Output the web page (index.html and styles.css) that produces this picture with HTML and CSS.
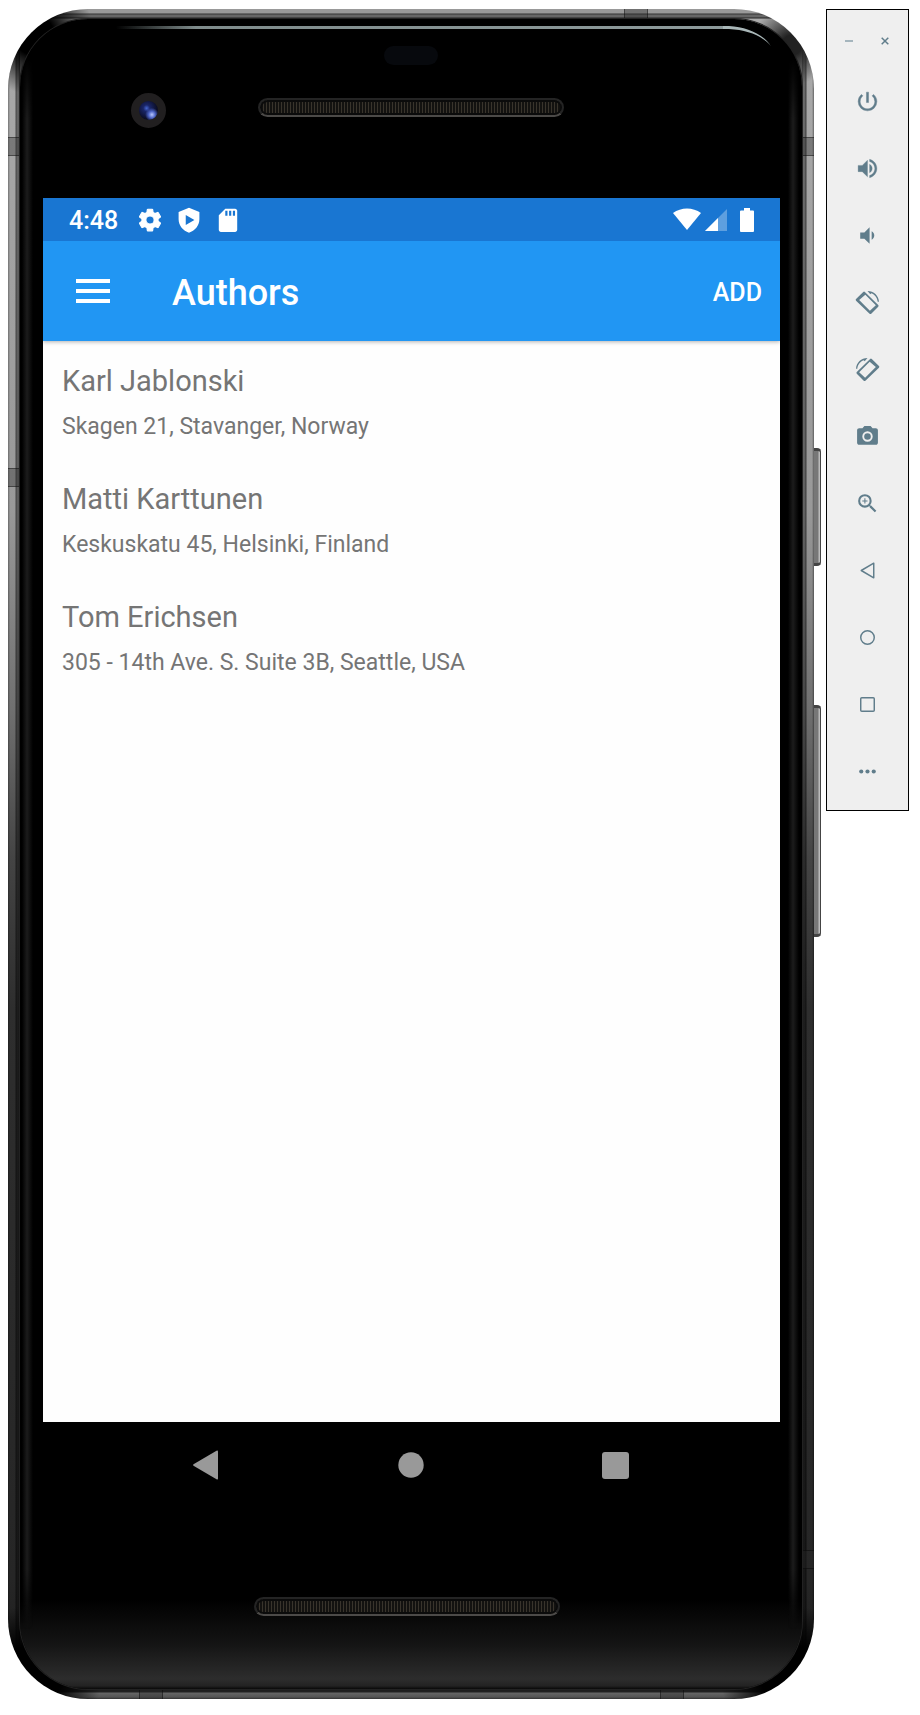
FILE: index.html
```html
<!DOCTYPE html>
<html lang="en">
<head>
<meta charset="utf-8">
<title>Authors</title>
<link rel="stylesheet" href="styles.css">
</head>
<body>
<main class="phone">
  <span class="side-key side-key-power"></span>
  <span class="side-key side-key-volume"></span>
  <div class="rim">
    <span class="seam seam-top"></span>
    <span class="seam seam-left-high"></span>
    <span class="seam seam-left-mid"></span>
    <span class="seam seam-right-high"></span>
    <span class="seam seam-right-low"></span>
    <span class="seam seam-bottom-left"></span>
    <span class="seam seam-bottom-right"></span>
    <div class="face">
      <div class="bezel-top">
        <div class="glint">
          <span class="glint-line"></span>
          <svg width="48" height="20" viewBox="0 0 48 20"><path d="M0 0H6C24 1 40 8 48 20C38 9 24 4 6 3H0Z" fill="#a9b7b8"/></svg>
        </div>
        <span class="sensor"></span>
        <div class="bezel-row">
          <span class="camera"></span>
          <span class="speaker"></span>
        </div>
      </div>
      <section class="screen">
        <div class="status-bar">
          <span class="clock">4:48</span>
          <svg width="26" height="26" viewBox="0 0 24 24"><path d="M19.43 12.98c.04-.32.07-.64.07-.98s-.03-.66-.07-.98l2.11-1.65c.19-.15.24-.42.12-.64l-2-3.46c-.12-.22-.39-.3-.61-.22l-2.49 1c-.52-.4-1.08-.73-1.69-.98l-.38-2.65C14.46 2.18 14.25 2 14 2h-4c-.25 0-.46.18-.49.42l-.38 2.65c-.61.25-1.17.59-1.69.98l-2.49-1c-.23-.09-.49 0-.61.22l-2 3.46c-.13.22-.07.49.12.64l2.11 1.65c-.04.32-.07.65-.07.98s.03.66.07.98l-2.11 1.65c-.19.15-.24.42-.12.64l2 3.46c.12.22.39.3.61.22l2.49-1c.52.4 1.08.73 1.69.98l.38 2.65c.03.24.24.42.49.42h4c.25 0 .46-.18.49-.42l.38-2.65c.61-.25 1.17-.59 1.69-.98l2.49 1c.23.09.49 0 .61-.22l2-3.46c.12-.22.07-.49-.12-.64l-2.11-1.65zM12 15.8a3.8 3.8 0 1 1 0-7.6 3.8 3.8 0 0 1 0 7.6z" stroke="#fff" stroke-width="1"/></svg>
          <svg width="26" height="26" viewBox="0 0 24 24"><path fill-rule="evenodd" d="M12 .8 2.400 4.600v6.800c0 6 4.200 10.600 9.600 12.400 5.400-1.800 9.600-6.400 9.600-12.400V4.600zM9 7.300v9.200l8-4.600z"/></svg>
          <svg width="26" height="26" viewBox="0 0 24 24"><path fill-rule="evenodd" d="M18.500 1.500H9.500L3.500 7.500v13.500c0 1.100.9 2 2 2h13c1.100 0 2-.9 2-2v-17.500c0-1.100-.9-2-2-2zM9.500 3.500h2v4.500h-2zM13 3.500h2v4.500h-2zM16.500 3.500h2v4.500h-2z"/></svg>
          <span class="status-gap"></span>
          <svg class="wifi" width="28" height="24" viewBox="0 0 28 24"><path d="M0 5C8-1 20-1 28 5L14 22Z"/></svg>
          <svg class="signal" width="22" height="24" viewBox="0 0 22 24"><path d="M22 1V23H0Z" opacity=".3"/><path d="M13 10V23H0Z"/></svg>
          <svg width="14" height="24" viewBox="0 0 14 24"><path d="M4 0h6v2.500h3q1 0 1 1V23q0 1-1 1H1q-1 0-1-1V3.500q0-1 1-1h3z"/></svg>
        </div>
        <header class="app-bar">
          <button class="menu" aria-label="Open navigation"><svg width="34" height="24" viewBox="0 0 34 24"><path d="M0 0h34v4H0zM0 10h34v4H0zM0 20h34v4H0z"/></svg></button>
          <h1 class="title">Authors</h1>
          <button class="add">ADD</button>
        </header>
        <ul class="authors">
          <li class="author"><h2 class="name">Karl Jablonski</h2><p class="address">Skagen 21, Stavanger, Norway</p></li>
          <li class="author"><h2 class="name">Matti Karttunen</h2><p class="address">Keskuskatu 45, Helsinki, Finland</p></li>
          <li class="author"><h2 class="name">Tom Erichsen</h2><p class="address">305 - 14th Ave. S. Suite 3B, Seattle, USA</p></li>
        </ul>
      </section>
      <nav class="nav-bar">
        <button aria-label="Back"><svg width="28" height="32" viewBox="0 0 28 32"><path d="M26 2.500V29.500Q26 31 24.500 30.200L1.500 16.800Q.5 16 1.500 15.200L24.500 1.800Q26 1 26 2.500Z"/></svg></button>
        <button aria-label="Home"><svg width="26" height="26" viewBox="0 0 26 26"><circle cx="13" cy="13" r="12.700"/></svg></button>
        <button aria-label="Recents"><svg width="27" height="27" viewBox="0 0 27 27"><rect width="27" height="27" rx="3"/></svg></button>
      </nav>
      <div class="bezel-bottom"><span class="speaker"></span></div>
    </div>
  </div>
</main>
<aside class="toolbar">
  <div class="window-keys">
    <button aria-label="Minimize"><svg width="8" height="8" viewBox="0 0 8 8"><path d="M0 4H8" stroke="#a5b5bd" stroke-width="2"/></svg></button>
    <button aria-label="Close"><svg width="8" height="8" viewBox="0 0 8 8"><path d="M.7.7 7.300 7.300M7.300.7.7 7.300" stroke="#607d8b" stroke-width="1.500"/></svg></button>
  </div>
  <button class="tool" aria-label="Power"><svg viewBox="0 0 24 24"><path d="M13 3h-2v10h2V3zm4.830 2.170-1.420 1.420A6.920 6.920 0 0 1 19 12c0 3.870-3.130 7-7 7s-7-3.130-7-7c0-2.190 1.010-4.140 2.580-5.420L6.170 5.170A8.932 8.932 0 0 0 3 12a9 9 0 0 0 18 0c0-2.740-1.230-5.180-3.170-6.830z" stroke="#607d8b" stroke-width=".4"/></svg></button>
  <button class="tool" aria-label="Volume up"><svg viewBox="0 0 24 24"><path d="M3 9v6h4l5 5V4L7 9H3zm13.500 3c0-1.770-1.020-3.290-2.500-4.030v8.050c1.480-.73 2.500-2.250 2.500-4.020zM14 3.230v2.060c2.890.86 5 3.540 5 6.710s-2.110 5.850-5 6.710v2.060c4.010-.91 7-4.490 7-8.770s-2.990-7.860-7-8.770z" stroke="#607d8b" stroke-width=".3"/></svg></button>
  <button class="tool" aria-label="Volume down"><svg viewBox="0 0 24 24"><path d="M18.500 12c0-1.770-1.020-3.290-2.500-4.030v8.050c1.480-.73 2.500-2.250 2.500-4.020zM5 9v6h4l5 5V4L9 9H5z"/></svg></button>
  <button class="tool" aria-label="Rotate left"><svg viewBox="0 0 24 24"><path fill-rule="evenodd" d="M9.500 1.800Q8.700 1 7.900 1.800L1 8.700Q.2 9.500 1 10.300L14 22.700Q14.800 23.500 15.600 22.700L22.300 16Q23 15.200 22.300 14.400ZM9.900 4.500 20 14.700 14.300 19.800 4 9.500Z"/><path d="M12 1C18 1 22.800 5.500 23 11.300H21.800C21.500 7.500 19 4.300 15.600 3L14.700 4Z"/></svg></button>
  <button class="tool" aria-label="Rotate right"><svg viewBox="0 0 24 24"><g transform="matrix(-1 0 0 1 24 0)"><path fill-rule="evenodd" d="M9.500 1.800Q8.700 1 7.900 1.800L1 8.700Q.2 9.500 1 10.300L14 22.700Q14.800 23.500 15.600 22.700L22.300 16Q23 15.200 22.300 14.400ZM9.900 4.500 20 14.700 14.300 19.800 4 9.500Z"/><path d="M12 1C18 1 22.800 5.500 23 11.300H21.800C21.500 7.500 19 4.300 15.600 3L14.700 4Z"/></g></svg></button>
  <button class="tool" aria-label="Take screenshot"><svg viewBox="0 0 24 24"><path fill-rule="evenodd" d="M9 2 7.170 4H4c-1.100 0-2 .9-2 2v12c0 1.100.9 2 2 2h16c1.100 0 2-.9 2-2V6c0-1.100-.9-2-2-2h-3.170L15 2H9zm3 15a5 5 0 1 1 0-10 5 5 0 0 1 0 10zm0-1.800a3.200 3.200 0 1 0 0-6.400 3.200 3.200 0 0 0 0 6.400z"/></svg></button>
  <button class="tool" aria-label="Zoom"><svg viewBox="0 0 24 24"><path d="M15.500 14h-.79l-.28-.27A6.471 6.471 0 0 0 16 9.500 6.500 6.500 0 1 0 9.500 16c1.610 0 3.090-.59 4.230-1.570l.27.28v.79l5 4.990L20.490 19l-4.990-5zm-6 0a4.500 4.500 0 1 1 0-9 4.500 4.500 0 0 1 0 9zM12 10h-2v2H9v-2H7V9h2V7h1v2h2v1z"/></svg></button>
  <button class="tool" aria-label="Back"><svg viewBox="0 0 24 24"><path d="M18 5V19L6 12Z" fill="none" stroke="#607d8b" stroke-width="1.400" stroke-linejoin="round"/></svg></button>
  <button class="tool" aria-label="Home"><svg viewBox="0 0 24 24"><circle cx="12" cy="12" r="6.500" fill="none" stroke="#607d8b" stroke-width="1.400"/></svg></button>
  <button class="tool" aria-label="Overview"><svg viewBox="0 0 24 24"><rect x="5.500" y="5.500" width="13" height="13" rx="1" fill="none" stroke="#607d8b" stroke-width="1.400"/></svg></button>
  <button class="tool" aria-label="More"><svg viewBox="0 0 24 24"><circle cx="6" cy="12" r="2"/><circle cx="12" cy="12" r="2"/><circle cx="18" cy="12" r="2"/></svg></button>
</aside>
</body>
</html>
```
FILE: styles.css
```css
* {
  box-sizing: border-box;
}

body {
  margin: 0;
  min-height: 100vh;
  padding: 9px 11px 16px 8px;
  display: flex;
  gap: 12px;
  background: #fff;
  font-family: Roboto, "Noto Sans", sans-serif;
}

button {
  margin: 0;
  padding: 0;
  border: 0;
  background: none;
  font: inherit;
  color: inherit;
}

svg {
  display: block;
  flex: none;
}

h1, h2, p, ul {
  margin: 0;
  padding: 0;
  font-weight: 400;
}

/* Device body */
.phone {
  position: relative;
  flex: 1;
  min-width: 0;
  display: flex;
}

.rim {
  position: relative;
  flex: 1;
  min-width: 0;
  display: flex;
  padding: 10px 12px;
  border-radius: 80px;
  overflow: hidden;
  background:
    radial-gradient(circle at 26px 26px, #000 20px, transparent 60px),
    radial-gradient(circle at calc(100% - 22px) 36px, #222 10px, transparent 40px),
    radial-gradient(circle at 24px calc(100% - 24px), #000 30px, transparent 70px),
    radial-gradient(circle at calc(100% - 24px) calc(100% - 24px), #000 30px, transparent 70px),
    linear-gradient(90deg, rgba(0, 0, 0, .3), transparent 2px 7px, rgba(0, 0, 0, .55) 8px, rgba(0, 0, 0, .35) 10px, rgba(0, 0, 0, .7) 12px, transparent 12px calc(100% - 12px), rgba(0, 0, 0, .55) calc(100% - 12px), rgba(0, 0, 0, .3) calc(100% - 10px), rgba(0, 0, 0, .6) calc(100% - 8px), transparent calc(100% - 7px) calc(100% - 2px), rgba(0, 0, 0, .4) 100%),
    linear-gradient(#999 0 4px, #333 5px, #666 6px 8px, #222 9px, #aaa 10px, #999 500px, #707070 700px, #444 850px, #2e2e2e 1000px, #262626 calc(100% - 120px), #1c1c1c calc(100% - 10px), #222 calc(100% - 7px), #666 calc(100% - 6px), #555 calc(100% - 2px), #333 100%);
}

.face {
  position: relative;
  flex: 1;
  min-width: 0;
  display: flex;
  flex-direction: column;
  border-radius: 68px;
  box-shadow: 0 0 0 1px #222;
  background: linear-gradient(#000 calc(100% - 90px), #141414 calc(100% - 45px), #2d2d2d calc(100% - 10px), #222 calc(100% - 3px), #080808 100%);
}

/* Soft reflection down both sides of the glass */
.face::before {
  content: "";
  position: absolute;
  inset: 40px 0 60px;
  background: linear-gradient(90deg, #000 2px, #1c1c1c 7px, transparent 13px calc(100% - 14px), #1c1c1c calc(100% - 9px), #000 calc(100% - 3px));
  -webkit-mask-image: linear-gradient(transparent, #000 60px calc(100% - 60px), transparent);
  mask-image: linear-gradient(transparent, #000 60px calc(100% - 60px), transparent);
  pointer-events: none;
}

.seam {
  position: absolute;
  background: rgba(40, 40, 40, .35);
  border: solid rgba(0, 0, 0, .4);
  border-width: 0;
}

.seam-top, .seam-bottom-left, .seam-bottom-right {
  width: 24px;
  height: 10px;
  border-width: 0 1px;
}

.seam-top { top: 0; right: 166px; }
.seam-bottom-left { bottom: 0; left: 131px; }
.seam-bottom-right { bottom: 0; right: 130px; }

.seam-left-high, .seam-left-mid, .seam-right-high, .seam-right-low {
  width: 12px;
  height: 19px;
  border-width: 1px 0;
}

.seam-left-high { top: 128px; left: 0; }
.seam-left-mid { top: 459px; left: 0; }
.seam-right-high { top: 128px; right: 0; }
.seam-right-low { bottom: 130px; right: 0; }

.side-key {
  position: absolute;
  right: -7px;
  width: 8px;
  border-radius: 0 4px 4px 0;
  border: solid #444;
  border-width: 3px 1px 3px 0;
  background: linear-gradient(90deg, #777 5px, #bbb 6px);
}

.side-key-power { top: 439px; height: 118px; }
.side-key-volume { top: 696px; height: 232px; }

.bezel-top {
  height: 179px;
  padding-top: 7px;
  display: flex;
  flex-direction: column;
}

.glint {
  height: 20px;
  margin: 0 31px 0 96px;
  display: flex;
}

.glint-line {
  flex: 1;
  height: 3px;
  background: linear-gradient(90deg, transparent, #7f8c8c 80px, #8d9a9b);
}

.sensor {
  width: 54px;
  height: 19px;
  border-radius: 10px;
  align-self: center;
  background: #07090d;
}

.bezel-row {
  margin-top: 28px;
  display: grid;
  grid-template-columns: 1fr 306px 1fr;
  align-items: start;
}

.bezel-row .speaker {
  margin-top: 5px;
}

.camera {
  width: 35px;
  height: 35px;
  margin-left: 18px;
  justify-self: center;
  border-radius: 50%;
  border: 8px solid #211f20;
  background: radial-gradient(circle at 68% 72%, #b9c8ff 0, #4c63c4 18%, transparent 36%), radial-gradient(circle at 40% 38%, #4666d0 0, #1a2668 20%, #0b0d24 65%);
}

.speaker {
  width: 306px;
  height: 19px;
  border-radius: 10px;
  border: 2px solid #242424;
  border-bottom-color: #4c4a48;
  background: repeating-linear-gradient(90deg, #39342c 0 1px, #131210 1px 3px);
  box-shadow: inset 0 0 0 2px #0b0b0b;
}

/* App screen */
.screen {
  flex: 1;
  margin: 0 22px 0 23px;
  background: #fefefe;
}

.status-bar {
  position: relative;
  z-index: 1;
  height: 43px;
  padding: 0 26px 0 26px;
  display: flex;
  align-items: center;
  background: #1976d2;
  color: #fff;
  fill: #fff;
}

.clock {
  margin-right: 19px;
  padding-top: 2px;
  font-size: 25px;
  font-weight: 500;
}

.status-bar svg + svg {
  margin-left: 13px;
}

.status-gap {
  flex: 1;
}

.status-bar .wifi + .signal {
  margin-left: 4px;
}

.app-bar {
  position: relative;
  height: 100px;
  padding: 0 18px 0 33px;
  display: flex;
  align-items: center;
  background: #2196f3;
  box-shadow: 0 1px 4px rgba(0, 0, 0, .3);
  color: #fff;
  fill: #fff;
}

.title {
  flex: 1;
  margin-left: 62px;
  padding-top: 4px;
  font-size: 36px;
  line-height: 44px;
  font-weight: 500;
}

.add {
  padding-top: 2px;
  font-size: 25px;
  font-weight: 500;
}

.authors {
  list-style: none;
}

.author {
  padding: 18px 19px;
  color: #757575;
}

.name {
  font-size: 29px;
  line-height: 44px;
}

.address {
  margin-top: 10px;
  font-size: 23px;
  line-height: 28px;
}

.nav-bar {
  height: 86px;
  padding: 0 84px;
  display: grid;
  grid-template-columns: repeat(3, 1fr);
  fill: #999;
}

.nav-bar button {
  display: grid;
  place-items: center;
}

.bezel-bottom {
  height: 181px;
  padding: 89px 8px 0 0;
  display: flex;
  justify-content: center;
}

/* Emulator controls */
.toolbar {
  width: 83px;
  align-self: flex-start;
  padding-bottom: 5px;
  border: 1px solid #000;
  background: #efefef;
  fill: #607d8b;
}

.window-keys {
  height: 58px;
  padding: 4px 6px 0 4px;
  display: grid;
  grid-template-columns: 36px 36px;
}

.window-keys button {
  display: grid;
  place-items: center;
}

.tool {
  width: 100%;
  height: 67px;
  display: grid;
  place-items: center;
}

.tool svg {
  width: 25px;
  height: 25px;
}
```
